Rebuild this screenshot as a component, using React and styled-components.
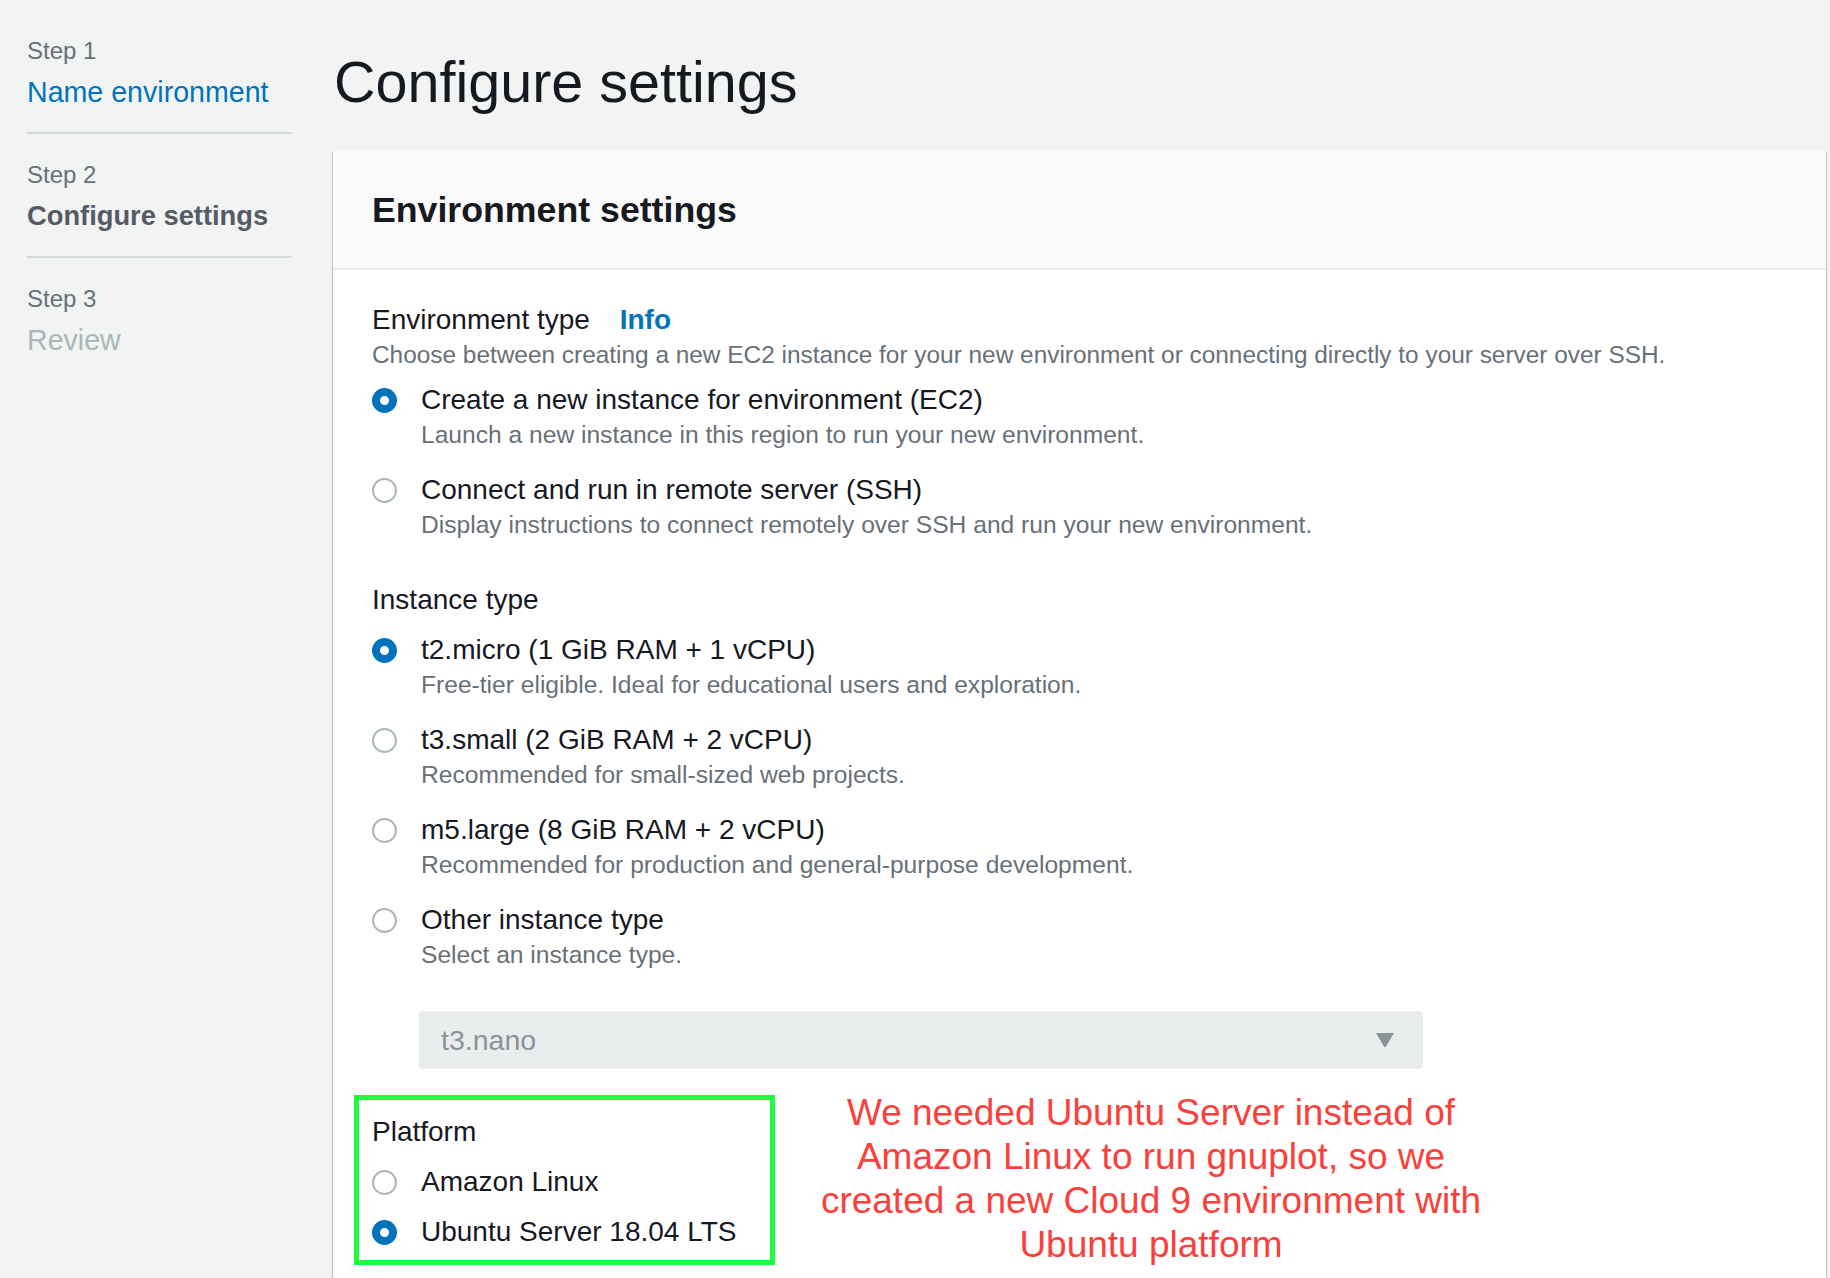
import { createGlobalStyle, styled } from "styled-components";

const GlobalStyle = createGlobalStyle`
  html, body {
    margin: 0;
    padding: 0;
    background: #f2f3f3;
  }
  body {
    font-family: "Liberation Sans", Arial, sans-serif;
    color: #16191f;
  }
`;

const steps = [
  { step: "Step 1", name: "Name environment", state: "done" },
  { step: "Step 2", name: "Configure settings", state: "current" },
  { step: "Step 3", name: "Review", state: "todo" },
];

const envTypes = [
  {
    label: "Create a new instance for environment (EC2)",
    hint: "Launch a new instance in this region to run your new environment.",
    checked: true,
  },
  {
    label: "Connect and run in remote server (SSH)",
    hint: "Display instructions to connect remotely over SSH and run your new environment.",
  },
];

const instanceTypes = [
  {
    label: "t2.micro (1 GiB RAM + 1 vCPU)",
    hint: "Free-tier eligible. Ideal for educational users and exploration.",
    checked: true,
  },
  {
    label: "t3.small (2 GiB RAM + 2 vCPU)",
    hint: "Recommended for small-sized web projects.",
  },
  {
    label: "m5.large (8 GiB RAM + 2 vCPU)",
    hint: "Recommended for production and general-purpose development.",
  },
  { label: "Other instance type", hint: "Select an instance type." },
];

const platforms = [
  { label: "Amazon Linux" },
  { label: "Ubuntu Server 18.04 LTS", checked: true },
];

const RadioOption = ({ option }) => (
  <StOption>
    <Circle $checked={option.checked} />
    <div>
      <OptionLabel>{option.label}</OptionLabel>
      {option.hint && <OptionHint>{option.hint}</OptionHint>}
    </div>
  </StOption>
);

const App = () => {
  return (
    <>
      <GlobalStyle />
      <Page>
        <Sidebar>
          {steps.map((s) => (
            <StepItem key={s.step}>
              <StepNo>{s.step}</StepNo>
              <StepName $state={s.state}>{s.name}</StepName>
            </StepItem>
          ))}
        </Sidebar>

        <Main>
          <Title>Configure settings</Title>
          <Card>
            <CardHeader>Environment settings</CardHeader>
            <CardBody>
              <Field>
                <FieldLabel>
                  Environment type <InfoLink>Info</InfoLink>
                </FieldLabel>
                <FieldDesc>
                  Choose between creating a new EC2 instance for your new
                  environment or connecting directly to your server over SSH.
                </FieldDesc>
                <OptionList>
                  {envTypes.map((o) => (
                    <RadioOption key={o.label} option={o} />
                  ))}
                </OptionList>
              </Field>

              <Field $gap={40}>
                <FieldLabel>Instance type</FieldLabel>
                <OptionList $top={14}>
                  {instanceTypes.map((o) => (
                    <RadioOption key={o.label} option={o} />
                  ))}
                </OptionList>
                <Select>
                  <span>t3.nano</span>
                  <svg width="20" height="16" viewBox="0 0 20 16">
                    <path
                      d="M1 1 H19 L11.2 14.2 Q10 16 8.8 14.2 Z"
                      fill="#879596"
                    />
                  </svg>
                </Select>
              </Field>

              <PlatformRow>
                <Highlight>
                  <FieldLabel>Platform</FieldLabel>
                  <OptionList $top={14} $gap={14}>
                    {platforms.map((o) => (
                      <RadioOption key={o.label} option={o} />
                    ))}
                  </OptionList>
                </Highlight>
                <Note>
                  We needed Ubuntu Server instead of
                  <br />
                  Amazon Linux to run gnuplot, so we
                  <br />
                  created a new Cloud 9 environment with
                  <br />
                  Ubuntu platform
                </Note>
              </PlatformRow>
            </CardBody>
          </Card>
        </Main>
      </Page>
    </>
  );
};

const Page = styled.div`
  min-height: 100vh;
  display: grid;
  grid-template-columns: 265px 1fr;
  column-gap: 41px;
  padding: 0 4px 0 27px;
  box-sizing: border-box;
`;

const Sidebar = styled.nav`
  padding-top: 10px;
`;

const StepItem = styled.div`
  padding: 26px 0 22px;
  border-bottom: 2px solid #d5dbdb;

  &:last-child {
    border-bottom: none;
  }
`;

const StepNo = styled.div`
  font-size: 24px;
  line-height: 30px;
  color: #687078;
`;

const StepName = styled.div`
  margin-top: 8px;
  font-size: ${({ $state }) => ($state === "current" ? "27.3px" : "28.6px")};
  line-height: 36px;
  font-weight: ${({ $state }) => ($state === "current" ? 700 : 400)};
  color: ${({ $state }) =>
    $state === "done" ? "#0073bb" : $state === "current" ? "#545b64" : "#aab7b8"};
`;

const Main = styled.main`
  padding-top: 48px;
  min-width: 0;
`;

const Title = styled.h1`
  margin: 0 0 35px 1px;
  font-size: 57.5px;
  line-height: 68px;
  font-weight: 400;
  color: #16191f;
`;

const Card = styled.section`
  background: #fff;
  box-shadow: 0 1px 1px 0 rgba(0, 28, 36, 0.3),
    1px 1px 1px 0 rgba(0, 28, 36, 0.15), -1px 1px 1px 0 rgba(0, 28, 36, 0.15);
`;

const CardHeader = styled.h2`
  margin: 0;
  padding: 37px 39px 36px;
  background: #fafafa;
  border-bottom: 2px solid #eaeded;
  font-size: 35.7px;
  line-height: 44px;
  font-weight: 700;
  color: #16191f;
`;

const CardBody = styled.div`
  padding: 32px 39px 60px;
`;

const Field = styled.div`
  margin-top: ${({ $gap }) => ($gap ? `${$gap}px` : "0")};
`;

const FieldLabel = styled.div`
  font-size: 28px;
  line-height: 36px;
  color: #16191f;
`;

const InfoLink = styled.span`
  margin-left: 22px;
  font-weight: 700;
  color: #0073bb;
`;

const FieldDesc = styled.div`
  margin-top: 1px;
  font-size: 24.4px;
  line-height: 32px;
  color: #687078;
`;

const OptionList = styled.div`
  margin-top: ${({ $top }) => ($top ? `${$top}px` : "11px")};
  display: flex;
  flex-direction: column;
  gap: ${({ $gap }) => ($gap ? `${$gap}px` : "20px")};
`;

const StOption = styled.div`
  display: grid;
  grid-template-columns: 49px 1fr;
  align-items: start;
`;

const Circle = styled.span`
  display: block;
  box-sizing: border-box;
  width: 25px;
  height: 25px;
  margin: 6px 0 0 0;
  border-radius: 50%;
  background: #fff;
  border: ${({ $checked }) =>
    $checked ? "8px solid #0073bb" : "2px solid #aab7b8"};
`;

const OptionLabel = styled.div`
  font-size: 28px;
  line-height: 36px;
  color: #16191f;
`;

const OptionHint = styled.div`
  font-size: 24.6px;
  line-height: 34px;
  color: #687078;
`;

const Select = styled.div`
  margin: 39px 0 0 47px;
  width: 1004px;
  height: 58px;
  box-sizing: border-box;
  padding: 0 28px 0 22px;
  display: flex;
  align-items: center;
  justify-content: space-between;
  background: #eaeded;
  border-radius: 4px;
  font-size: 28.5px;
  color: #879596;
`;

const PlatformRow = styled.div`
  margin: 26px 0 0 -18px;
  display: flex;
  align-items: flex-start;
  gap: 16px;
`;

const Highlight = styled.div`
  width: 421px;
  box-sizing: border-box;
  padding: 14px 13px 10px;
  border: 5px solid #1efc3c;
`;

const Note = styled.div`
  width: 720px;
  margin-top: -4px;
  text-align: center;
  font-family: "Liberation Sans", Arial, sans-serif;
  font-size: 37px;
  line-height: 44px;
  color: #fc3f3a;
`;

export default App;
